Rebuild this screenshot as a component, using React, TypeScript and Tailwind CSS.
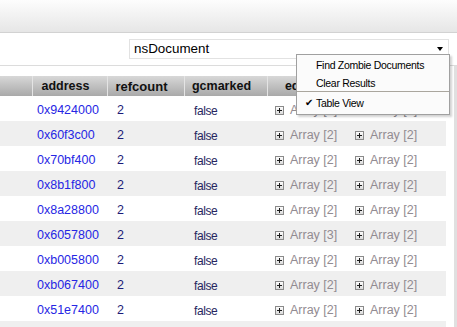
import React from "react";

const rows = [
  { addr: "0x9424000", a: "Array [2]", b: "Array [2]" },
  { addr: "0x60f3c00", a: "Array [2]", b: "Array [2]" },
  { addr: "0x70bf400", a: "Array [2]", b: "Array [2]" },
  { addr: "0x8b1f800", a: "Array [2]", b: "Array [2]" },
  { addr: "0x8a28800", a: "Array [2]", b: "Array [2]" },
  { addr: "0x6057800", a: "Array [3]", b: "Array [2]" },
  { addr: "0xb005800", a: "Array [2]", b: "Array [2]" },
  { addr: "0xb067400", a: "Array [2]", b: "Array [2]" },
  { addr: "0x51e7400", a: "Array [2]", b: "Array [2]" },
  { addr: "", a: "", b: "" },
];

function PlusBox() {
  return (
    <svg width="9" height="9" viewBox="0 0 9 9" className="shrink-0">
      <defs>
        <linearGradient id="pb" x1="0" y1="0" x2="0" y2="1">
          <stop offset="0" stopColor="#ffffff" />
          <stop offset="1" stopColor="#d8d8d8" />
        </linearGradient>
      </defs>
      <rect x="0.5" y="0.5" width="8" height="8" fill="url(#pb)" stroke="#8a8a8a" />
      <rect x="2" y="4" width="5" height="1" fill="#1a1a1a" />
      <rect x="4" y="2" width="1" height="5" fill="#1a1a1a" />
    </svg>
  );
}

function ArrayCell({ text }: { text: string }) {
  if (!text) return null;
  return (
    <div className="flex items-center gap-[6px]">
      <PlusBox />
      <span className="text-[#928b91]">{text}</span>
    </div>
  );
}

export default function App() {
  return (
    <div
      className="relative w-[457px] h-[327px] overflow-hidden bg-white text-[12.5px] leading-none"
      style={{ fontFamily: '"Liberation Sans", Arial, sans-serif' }}
    >
      {/* top band */}
      <div className="h-[33px] bg-gradient-to-b from-[#fdfdfd] to-[#e6e6e6] border-b border-[#d2d2d2]" />
      {/* toolbar */}
      <div className="h-[33px] border-b border-[#dcdcdc] pt-[6px] pl-[129px]">
        <div className="relative w-[320px] h-[20px] border border-[#e2e2e2] bg-white flex items-center pl-[4px] text-[13.4px] text-black">
          nsDocument
          <div className="absolute right-[5px] top-[7px] w-0 h-0 border-l-[3px] border-r-[3px] border-t-[4px] border-l-transparent border-r-transparent border-t-black" />
        </div>
      </div>
      <div className="flex">
        <div className="w-[446px]">
          <div className="h-[10px]" />
          {/* header */}
          <div className="flex h-[20px] bg-gradient-to-b from-[#d8d8d8] to-[#a9a9a9] font-bold text-[#111] text-[12.5px]">
            <div className="w-[33px] border-r border-[#e4e4e4]" />
            <div className="w-[75px] border-r border-[#e4e4e4] flex items-center justify-center pr-[9px]">address</div>
            <div className="w-[77px] border-r border-[#e4e4e4] flex items-center justify-center pr-[9px] text-[13px]">refcount</div>
            <div className="w-[83px] border-r border-[#e4e4e4] flex items-center justify-center pr-[9px]">gcmarked</div>
            <div className="w-[80px] border-r border-[#e4e4e4] flex items-center justify-center pr-[9px]">edges</div>
            <div className="w-[98px] flex items-center justify-center pr-[9px]">owners</div>
          </div>
          {rows.map((r, i) => (
            <div key={i} className={`flex h-[25px] items-center pt-[4px] ${i % 2 === 1 ? "bg-[#efefef]" : "bg-white"}`}>
              <div className="w-[33px]" />
              <div className="w-[75px] pl-[4px] text-[#2626e4]">{r.addr}</div>
              <div className="w-[77px] pl-[9px] text-[#1c1c78]">{r.addr ? "2" : ""}</div>
              <div className="w-[83px] pl-[9px] text-[#262660] text-[12px] tracking-[-0.4px]">{r.addr ? "false" : ""}</div>
              <div className="w-[80px] pl-[7px]"><ArrayCell text={r.a} /></div>
              <div className="w-[98px] pl-[7px]"><ArrayCell text={r.b} /></div>
            </div>
          ))}
        </div>
        <div className="w-[8px] bg-white" />
        <div className="w-[3px] bg-[#e0e0e0]" />
      </div>

      {/* popup menu */}
      <div className="absolute left-[296px] top-[54px] w-[154px] bg-[#fbfbfb] border border-[#a0a0a0] shadow-[2px_2px_2px_rgba(0,0,0,0.18)] text-[10.5px] tracking-[-0.3px] text-black">
        <div className="h-[19px] pl-[19px] pt-[2px] flex items-center">Find Zombie Documents</div>
        <div className="h-[17px] pl-[19px] pt-[1px] flex items-center">Clear Results</div>
        <div className="h-[1px] bg-[#aaa69e]" />
        <div className="h-[22px] flex items-center pl-[8px]">
          <span className="inline-block w-[11px] text-[10px]">✔</span>
          <span>Table View</span>
        </div>
      </div>
    </div>
  );
}
